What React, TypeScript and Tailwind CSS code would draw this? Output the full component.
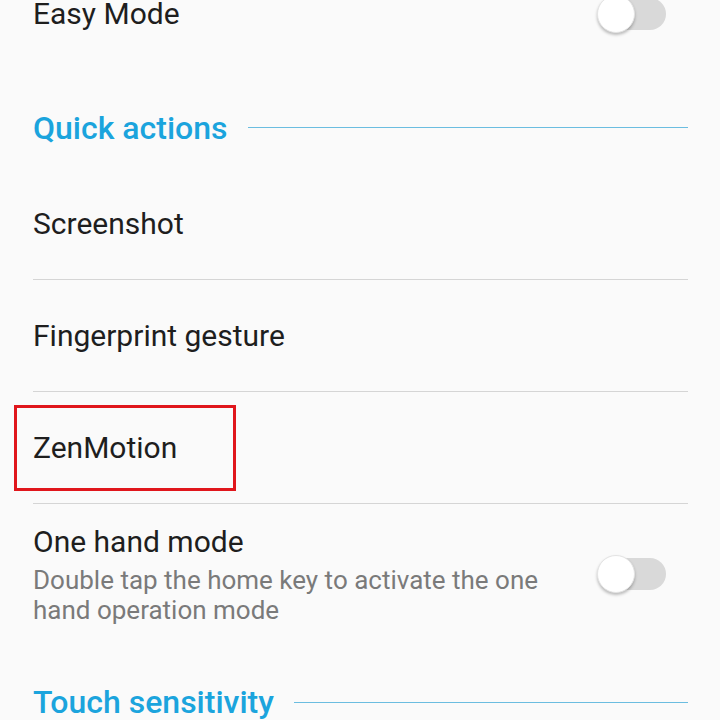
import React from "react";

const Toggle = () => {
    return (
        <div className="relative mr-[22px] h-[32px] w-[62px] shrink-0 rounded-full bg-[#d9d9d9]">
            <div className="absolute left-[-7px] top-[-3px] h-[38px] w-[38px] rounded-full border border-[#e4e4e4] bg-white shadow-[0_2px_3px_rgba(0,0,0,0.25)]"></div>
        </div>
    );
};

const SectionHeader = ({ title }: { title: string }) => {
    return (
        <div className="flex items-center gap-5">
            <span className="text-[32px] font-medium leading-[38px] text-[#1ba4dd]">
                {title}
            </span>
            <div className="h-px flex-1 bg-[#6bbde0]"></div>
        </div>
    );
};

const Row = ({ title }: { title: string }) => {
    return (
        <div className="flex h-[112px] items-center border-b border-[#d5d5d5]">
            <span className="text-[30px] leading-[38px] text-[#1e1e1e]">
                {title}
            </span>
        </div>
    );
};

export default function App() {
    return (
        <div
            className="relative h-[720px] w-[720px] overflow-hidden bg-[#fafafa]"
            style={{ fontFamily: "Roboto, 'Noto Sans', sans-serif" }}
        >
            <div className="pl-[33px] pr-[32px]">
                {/* Easy Mode */}
                <div className="-mt-[42px] flex h-[112px] items-center justify-between">
                    <span className="text-[30px] leading-[38px] text-[#1e1e1e]">
                        Easy Mode
                    </span>
                    <Toggle />
                </div>

                {/* Quick actions */}
                <div className="flex h-[98px] flex-col justify-center pt-[17px]">
                    <SectionHeader title="Quick actions" />
                </div>

                <Row title="Screenshot" />
                <Row title="Fingerprint gesture" />
                <Row title="ZenMotion" />

                {/* One hand mode */}
                <div className="flex items-center justify-between pt-[19px]">
                    <div className="w-[540px]">
                        <div className="text-[30px] leading-[38px] text-[#1e1e1e]">
                            One hand mode
                        </div>
                        <div className="mt-[4px] text-[26px] leading-[30px] text-[#7a7a7a]">
                            Double tap the home key to activate the one
                            <br />
                            hand operation mode
                        </div>
                    </div>
                    <Toggle />
                </div>

                {/* Touch sensitivity */}
                <div className="pt-[58px]">
                    <SectionHeader title="Touch sensitivity" />
                </div>
            </div>

            {/* annotation box */}
            <div className="absolute left-[14px] top-[405px] h-[86px] w-[222px] border-[3px] border-[#e0161c]"></div>
        </div>
    );
}
